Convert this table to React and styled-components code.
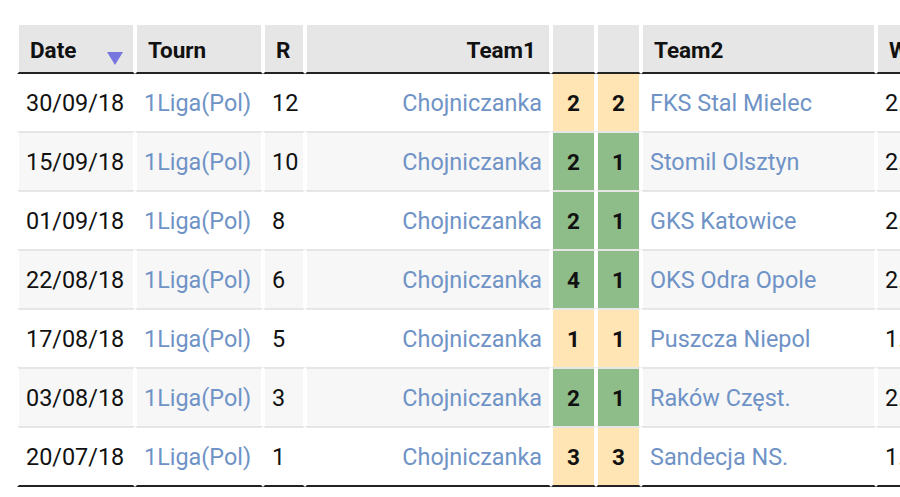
import React from "react";
import styled, { createGlobalStyle } from "styled-components";

const Global = createGlobalStyle`
  html, body { margin: 0; padding: 0; background: #fff; overflow: hidden; }
  body { font-family: Roboto, "Noto Sans", "Liberation Sans", sans-serif; }
`;

const Page = styled.div`
  width: 900px;
  height: 497px;
  overflow: hidden;
  padding: 23px 0 0 17px;
  box-sizing: border-box;
`;

const Table = styled.table`
  border-collapse: separate;
  border-spacing: 0;
  table-layout: fixed;
  width: 949px;
  font-size: 23.4px;
  color: #111;
`;

const Th = styled.th`
  background: #e6e6e6;
  height: 45px;
  padding: 2px 11px 0 11px;
  border: 2px solid #fff;
  border-bottom: 2px solid #222;
  font-weight: 700;
  font-size: 22.5px;
  text-align: ${(p) => (p.$right ? "right" : "left")};
  padding-right: ${(p) => (p.$right ? "13px" : "11px")};
  white-space: nowrap;
  overflow: hidden;
  color: #111;
`;

const HeadInner = styled.div`
  display: flex;
  align-items: center;
  justify-content: space-between;
`;

const Arrow = styled.svg`
  width: 16px;
  height: 13px;
  margin-top: 18px;
  margin-right: -1px;
  flex: none;
`;

const Row = styled.tr`
  background: ${(p) => (p.$alt ? "#f7f7f7" : "#fff")};
  & > td { border-top: 2px solid #e6e6e6; }
  &:first-child > td { border-top: 0; }
  &:last-child > td { border-bottom: 2px solid #222; }
`;

const Td = styled.td`
  height: 57px;
  padding: 0 7px;
  border-left: 2px solid #fff;
  border-right: 2px solid #fff;
  white-space: nowrap;
  overflow: hidden;
  text-align: ${(p) => p.$align || "left"};
  color: ${(p) => (p.$link ? "#6f93c6" : "#111")};
`;

const Score = styled.td`
  height: 57px;
  padding: 0;
  border-left: 2px solid #fff;
  border-right: 2px solid #fff;
  text-align: center;
  font-weight: 700;
  font-size: 22.5px;
  color: #111;
  background: ${(p) => (p.$win ? "#8ebd8a" : "#ffe5b4")};
`;

const rows = [
  ["30/09/18", "12", "2", "2", "FKS Stal Mielec", "2.10"],
  ["15/09/18", "10", "2", "1", "Stomil Olsztyn", "2.05"],
  ["01/09/18", "8", "2", "1", "GKS Katowice", "2.20"],
  ["22/08/18", "6", "4", "1", "OKS Odra Opole", "2.15"],
  ["17/08/18", "5", "1", "1", "Puszcza Niepol", "1.95"],
  ["03/08/18", "3", "2", "1", "Raków Częst.", "2.30"],
  ["20/07/18", "1", "3", "3", "Sandecja NS.", "1.85"],
];

export default function App() {
  return (
    <Page>
      <Global />
      <Table>
        <colgroup>
          <col style={{ width: 118 }} />
          <col style={{ width: 128 }} />
          <col style={{ width: 42 }} />
          <col style={{ width: 246 }} />
          <col style={{ width: 45 }} />
          <col style={{ width: 45 }} />
          <col style={{ width: 235 }} />
          <col style={{ width: 90 }} />
        </colgroup>
        <thead>
          <tr>
            <Th>
              <HeadInner>
                <span>Date</span>
                <Arrow viewBox="0 0 16 13">
                  <polygon points="0,0 16,0 8,13" fill="#7676de" />
                </Arrow>
              </HeadInner>
            </Th>
            <Th>Tourn</Th>
            <Th>R</Th>
            <Th $right>Team1</Th>
            <Th />
            <Th />
            <Th>Team2</Th>
            <Th>W1</Th>
          </tr>
        </thead>
        <tbody>
          {rows.map((r, i) => {
            const win = Number(r[2]) > Number(r[3]);
            return (
              <Row key={i} $alt={i % 2 === 1}>
                <Td>{r[0]}</Td>
                <Td $link>1Liga(Pol)</Td>
                <Td>{r[1]}</Td>
                <Td $link $align="right">Chojniczanka</Td>
                <Score $win={win}>{r[2]}</Score>
                <Score $win={win}>{r[3]}</Score>
                <Td $link>{r[4]}</Td>
                <Td>{r[5]}</Td>
              </Row>
            );
          })}
        </tbody>
      </Table>
    </Page>
  );
}
